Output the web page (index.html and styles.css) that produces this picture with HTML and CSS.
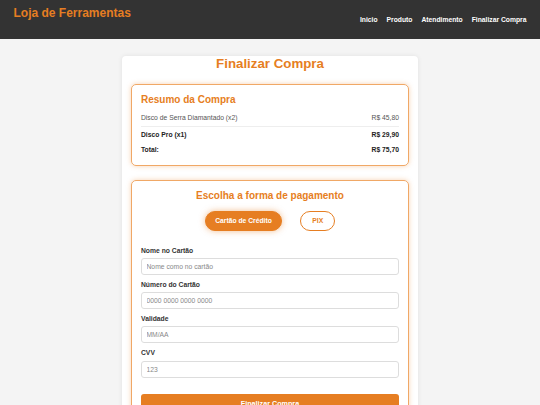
FILE: index.html
```html
<!DOCTYPE html>
<html lang="pt-BR">
<head>
<meta charset="utf-8">
<title>Finalizar Compra - Loja de Ferramentas</title>
<link rel="stylesheet" href="styles.css">
</head>
<body>
<header class="site-header">
  <div class="brand">Loja de Ferramentas</div>
  <nav class="nav">
    <a href="#">Inicio</a>
    <a href="#">Produto</a>
    <a href="#">Atendimento</a>
    <a href="#">Finalizar Compra</a>
  </nav>
</header>
<main class="container">
  <h2 class="page-title">Finalizar Compra</h2>
  <section class="box summary">
    <h3 class="box-title">Resumo da Compra</h3>
    <div class="row row-sep"><span>Disco de Serra Diamantado (x2)</span><span>R$ 45,80</span></div>
    <div class="row row-strong"><span>Disco Pro (x1)</span><span>R$ 29,90</span></div>
    <div class="row row-strong"><span>Total:</span><span>R$ 75,70</span></div>
  </section>
  <section class="box payment">
    <h3 class="box-title centered">Escolha a forma de pagamento</h3>
    <div class="methods">
      <button class="method active">Cartão de Crédito</button>
      <button class="method pix">PIX</button>
    </div>
    <div class="field">
      <label>Nome no Cartão</label>
      <input type="text" placeholder="Nome como no cartão">
    </div>
    <div class="field">
      <label>Número do Cartão</label>
      <input type="text" placeholder="0000 0000 0000 0000">
    </div>
    <div class="field">
      <label>Validade</label>
      <input type="text" placeholder="MM/AA">
    </div>
    <div class="field">
      <label>CVV</label>
      <input type="text" placeholder="123">
    </div>
    <button class="submit">Finalizar Compra</button>
  </section>
</main>
</body>
</html>
```

FILE: styles.css
```css
* { box-sizing: border-box; }

body {
  margin: 0;
  background: #f4f4f4;
  font-family: "Liberation Sans", Arial, sans-serif;
  font-size: 6.75px;
  line-height: 7.8px;
  color: #333;
}

.site-header {
  display: flex;
  justify-content: space-between;
  align-items: center;
  height: 39px;
  padding: 0 13.5px;
  background: #333;
}

.brand {
  align-self: flex-start;
  margin-top: 7px;
  font-size: 12px;
  line-height: 13.8px;
  font-weight: bold;
  color: #e67e22;
}

.nav {
  display: flex;
  gap: 9px;
}

.nav a {
  color: #fff;
  text-decoration: none;
  font-weight: bold;
  font-size: 6.75px;
}

.container {
  width: 296px;
  margin: 17px auto 0;
  padding: 0 9px 9px;
  background: #fff;
  border-radius: 4px;
  box-shadow: 0 0 5px rgba(0, 0, 0, 0.08);
}

.page-title {
  margin: 0 0 12.7px;
  text-align: center;
  font-size: 13.3px;
  line-height: 15.3px;
  font-weight: bold;
  color: #e67e22;
}

.box {
  border: 1px solid #f0a866;
  border-radius: 5px;
  padding: 9px;
  box-shadow: 0 0 5px rgba(230, 126, 34, 0.35);
}

.summary {
  padding-bottom: 7px;
  margin-bottom: 14px;
}

.box-title {
  margin: 0 0 4.3px;
  font-size: 10px;
  line-height: 11.5px;
  font-weight: bold;
  color: #e67e22;
}

.box-title.centered {
  text-align: center;
  margin-bottom: 9.3px;
}

.row {
  display: flex;
  justify-content: space-between;
  padding: 4px 0;
  color: #555;
}

.row-sep {
  border-bottom: 1px solid #eee;
}

.row-strong {
  font-weight: bold;
  color: #222;
}

.methods {
  display: flex;
  justify-content: center;
  gap: 18px;
  margin-bottom: 15.8px;
}

.method {
  height: 20px;
  padding: 0 9.4px;
  border: 1px solid #e67e22;
  border-radius: 10px;
  background: #fff;
  color: #e67e22;
  font-family: "Liberation Sans", Arial, sans-serif;
  font-size: 6.75px;
  line-height: 7.8px;
  font-weight: bold;
}

.method.active {
  background: #e67e22;
  color: #fff;
  box-shadow: 0 0 6px rgba(230, 126, 34, 0.5);
}

.method.pix {
  padding: 0 11px;
}

.field {
  margin-bottom: 6px;
}

.field label {
  display: block;
  margin-bottom: 3.4px;
  font-weight: bold;
  color: #333;
}

.field input {
  display: block;
  width: 100%;
  height: 17px;
  padding: 0 4.5px;
  border: 1px solid #ddd;
  border-radius: 3px;
  font-family: "Liberation Sans", Arial, sans-serif;
  font-size: 6.75px;
  line-height: 7.8px;
  color: #333;
}

.field input::placeholder {
  color: #888;
}

.submit {
  display: block;
  width: 100%;
  margin-top: 16.4px;
  padding: 6px;
  border: none;
  border-radius: 3px;
  background: #e67e22;
  color: #fff;
  font-family: "Liberation Sans", Arial, sans-serif;
  font-size: 7.2px;
  line-height: 8.3px;
  font-weight: bold;
}
```
